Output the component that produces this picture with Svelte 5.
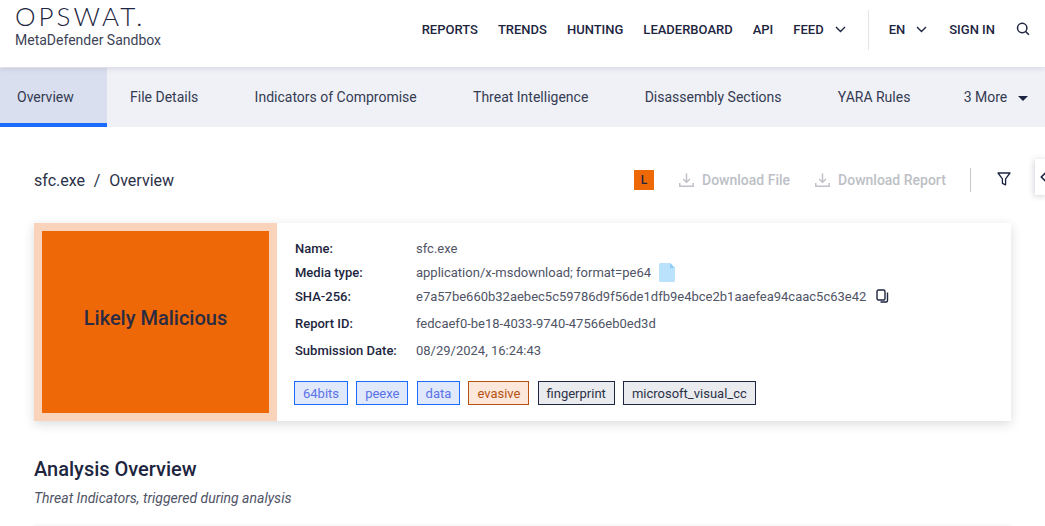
<script>
  const menu = [
    { label: 'REPORTS' }, { label: 'TRENDS' }, { label: 'HUNTING' }, { label: 'LEADERBOARD' }, { label: 'API' }, { label: 'FEED', caret: true }
  ];
  const tabs = ['Overview', 'File Details', 'Indicators of Compromise', 'Threat Intelligence', 'Disassembly Sections', 'YARA Rules'];
  const tags = [
    { t: '64bits', k: 'blue' }, { t: 'peexe', k: 'blue' }, { t: 'data', k: 'blue' },
    { t: 'evasive', k: 'orange' }, { t: 'fingerprint', k: 'grey' }, { t: 'microsoft_visual_cc', k: 'grey' }
  ];
</script>

<div class="page">
  <header class="top">
    <div class="brand">
      <div class="logo">OPSWAT.</div>
      <div class="product">MetaDefender Sandbox</div>
    </div>
    <nav class="menu">
      {#each menu as m}
        <span class="item">{m.label}{#if m.caret}<svg class="chev" width="11" height="7" viewBox="0 0 11 7"><path d="M1 1l4.500 4.500L10 1" fill="none" stroke="#1d2540" stroke-width="1.400"/></svg>{/if}</span>
      {/each}
      <span class="sep"></span>
      <span class="item lang">EN<svg class="chev" width="11" height="7" viewBox="0 0 11 7"><path d="M1 1l4.500 4.500L10 1" fill="none" stroke="#1d2540" stroke-width="1.400"/></svg></span>
      <span class="item signin">SIGN IN</span>
      <svg class="search" width="14" height="14" viewBox="0 0 14 14"><circle cx="6.200" cy="6" r="4.700" fill="none" stroke="#1d2540" stroke-width="1.500"/><path d="m9.600 9.500 3.300 3.300" stroke="#1d2540" stroke-width="1.600"/></svg>
    </nav>
  </header>

  <div class="tabs">
    {#each tabs as t, i}
      <div class="tab" class:active={i === 0}>{t}</div>
    {/each}
    <div class="tab more">3 More<svg width="10" height="5" viewBox="0 0 10 5"><path d="M0 0h10L5 5z" fill="#1d2540"/></svg></div>
  </div>

  <main class="content">
    <div class="titlebar">
      <div class="crumb"><span>sfc.exe</span><span class="slash">/</span><span>Overview</span></div>
      <div class="actions">
        <span class="badge">L</span>
        <span class="dl first">
          <svg width="15" height="16" viewBox="0 0 15 16"><path d="M7.500 1.500v8.500M4.100 7l3.400 3.200L10.900 7M.8 11v3.200h13.400V11" fill="none" stroke="#c0c2c8" stroke-width="1.500"/></svg>
          Download File
        </span>
        <span class="dl">
          <svg width="15" height="16" viewBox="0 0 15 16"><path d="M7.500 1.500v8.500M4.100 7l3.400 3.200L10.900 7M.8 11v3.200h13.400V11" fill="none" stroke="#c0c2c8" stroke-width="1.500"/></svg>
          Download Report
        </span>
        <span class="vline"></span>
        <svg class="filter" width="14" height="14" viewBox="0 0 14 14"><path d="M1 1h12L8.600 6.800v6l-3.200-1.500V6.800z" fill="none" stroke="#1d2540" stroke-width="1.300" stroke-linejoin="round"/></svg>
      </div>
    </div>

    <section class="card">
      <div class="verdict"><div class="verdict-inner">Likely Malicious</div></div>
      <div class="info">
        <dl class="rows">
          <dt class="r1">Name:</dt><dd class="r1">sfc.exe</dd>
          <dt class="r1">Media type:</dt>
          <dd class="r1 mt">application/x-msdownload; format=pe64
            <svg width="16" height="19" viewBox="0 0 16 19"><path d="M1.500 0H11l5 5v12.500a1.500 1.500 0 0 1-1.500 1.500h-13A1.500 1.500 0 0 1 0 17.500V1.500A1.500 1.500 0 0 1 1.500 0z" fill="#bbe2fd"/><path d="M11 0l5 5h-5z" fill="#8fcdf8"/></svg>
          </dd>
          <dt class="r1">SHA-256:</dt>
          <dd class="r1 mt">e7a57be660b32aebec5c59786d9f56de1dfb9e4bce2b1aaefea94caac5c63e42
            <svg class="copy" width="13" height="14" viewBox="0 0 13 14"><rect x="1" y="1" width="8" height="10" rx="1.500" fill="#fff" stroke="#1d2540" stroke-width="1.400"/><path d="M11.500 3.500V11.500a1.500 1.500 0 0 1-1.500 1.500H4.500" fill="none" stroke="#1d2540" stroke-width="1.400"/></svg>
          </dd>
          <dt class="r2">Report ID:</dt><dd class="r2">fedcaef0-be18-4033-9740-47566eb0ed3d</dd>
          <dt class="r2">Submission Date:</dt><dd class="r2">08/29/2024, 16:24:43</dd>
        </dl>
        <div class="tags">
          {#each tags as tag}<span class="tag {tag.k}">{tag.t}</span>{/each}
        </div>
      </div>
    </section>

    <h2>Analysis Overview</h2>
    <p class="sub">Threat Indicators, triggered during analysis</p>
    <div class="next"></div>
  </main>

  <div class="side"><svg width="8" height="12" viewBox="0 0 8 12"><path d="M6.500 1 1.500 6l5 5" fill="none" stroke="#1d2540" stroke-width="1.800"/></svg></div>
</div>

<style>
  :global(body) { margin: 0; background: #fff; }
  .page {
    position: relative; width: 1045px; height: 526px; overflow: hidden;
    font-family: Roboto, "Liberation Sans", sans-serif; color: #1d2540; font-size: 14px;
  }
  .top {
    height: 67px; display: flex; justify-content: space-between; box-sizing: border-box;
    background: #fff; position: relative; z-index: 2;
    box-shadow: 0 1px 6px rgba(29, 37, 64, 0.14);
  }
  .brand { padding: 3px 0 0 15px; }
  .logo {
    font-family: Lato, sans-serif; font-weight: 300; font-size: 26px; line-height: 26px;
    letter-spacing: 3px; color: #1d2540; height: 26px; margin-bottom: 2px;
  }
  .product { font-size: 14px; line-height: 18px; color: #3d4356; }
  .menu { display: flex; align-items: center; padding: 0 15px 8px 0; font-size: 13px; font-weight: 500; }
  .item { display: flex; align-items: center; margin-right: 20px; white-space: nowrap; }
  .chev { margin-left: 11px; }
  .sep { width: 1px; height: 40px; background: #e3e4e8; margin: 0 20px 0 2px; }
  .lang { margin-right: 22px; }
  .signin { margin-right: 21px; }
  .search { margin-top: -2px; }
  .tabs {
    height: 60px; box-sizing: border-box; display: flex; background: #f0f1f7; padding-top: 1px;
    font-size: 14px;
  }
  .tab { display: flex; align-items: center; padding: 0 33.300px 1px 23px; white-space: nowrap; color: #343b52; }
  .tab:first-child { padding-left: 17px; }
  .tab.active { background: #d9dfee; border-bottom: 4px solid #1d6bfc; padding: 3px 0 0 17px; height: 59px; box-sizing: border-box; width: 107px; }
  .more svg { margin-left: 11px; margin-top: 2px; }
  .more { padding-left: 20px; padding-right: 0; }
  .content { padding: 0 34px; width: 977px; }
  .titlebar { display: flex; justify-content: space-between; align-items: center; height: 36px; margin-top: 35px; }
  .crumb { font-size: 16px; display: flex; gap: 8.800px; color: #2b3147; }
  .actions { display: flex; align-items: center; width: 365px; font-size: 14px; font-weight: 500; margin-right: 12px; flex: none; position: relative; }
  .badge { width: 20px; height: 20px; background: #ef6807; font-size: 12px; display: flex; align-items: center; justify-content: center; flex: none; }
  .dl { color: #bdbfc6; display: flex; align-items: center; gap: 8px; white-space: nowrap; margin-left: 25px; }
  .vline { width: 1px; height: 24px; background: #c5c7cc; margin-left: 24px; flex: none; }
  .filter { margin-left: 26px; flex: none; margin-top: -2px; }
  .card {
    display: flex; height: 198px; margin-top: 25px; background: #fff;
    box-shadow: 0 3px 10px rgba(29, 37, 64, 0.16);
  }
  .verdict { width: 243px; box-sizing: border-box; border: 8px solid #f9d4bb; flex: none; }
  .verdict-inner { height: 100%; box-sizing: border-box; padding-bottom: 8px; background: #ef6807; display: flex; align-items: center; justify-content: center; font-size: 20px; font-weight: 500; color: #2b2c42; }
  .info { padding: 13px 0 0 18px; font-size: 13px; }
  .rows { display: grid; grid-template-columns: 121px auto; margin: 0; }
  dt { font-weight: 500; color: #1d2540; }
  dd { margin: 0; color: #4f5466; display: flex; align-items: center; white-space: nowrap; }
  .r1 { height: 24px; display: flex; align-items: center; }
  .r2 { height: 27px; display: flex; align-items: center; padding-top: 3px; box-sizing: border-box; }
  .mt svg { margin-left: 8px; }
  .mt svg.copy { margin-left: 10px; }
  .tags { display: flex; gap: 8.100px; margin: 18px 0 0 -1px; padding-top: 1px; }
  .tag { height: 24px; box-sizing: border-box; border: 1px solid; display: flex; align-items: center; padding: 0 8px; font-size: 13px; white-space: nowrap; }
  .blue { background: #e0e8fb; border-color: #1d6bfc; color: #5b73e8; }
  .orange { background: #fde7da; border-color: #b5520f; color: #b5520f; }
  .grey { background: #e9ebee; border-color: #1d2540; color: #2b3147; }
  h2 { font-size: 20px; font-weight: 500; line-height: 24px; margin: 36px 0 0; color: #1d2540; }
  .sub { font-style: italic; font-size: 14px; line-height: 18px; margin: 8px 0 0; color: #4f5466; }
  .next { height: 30px; margin-top: 19px; box-shadow: 0 -1px 3px rgba(29, 37, 64, 0.05); }
  .side {
    position: absolute; left: 1035px; top: 159px; width: 12px; height: 36px; background: #fff; z-index: 3;
    box-shadow: -1px 1px 6px rgba(29, 37, 64, 0.2); display: flex; align-items: center; padding-left: 5px; box-sizing: border-box;
  }
</style>
